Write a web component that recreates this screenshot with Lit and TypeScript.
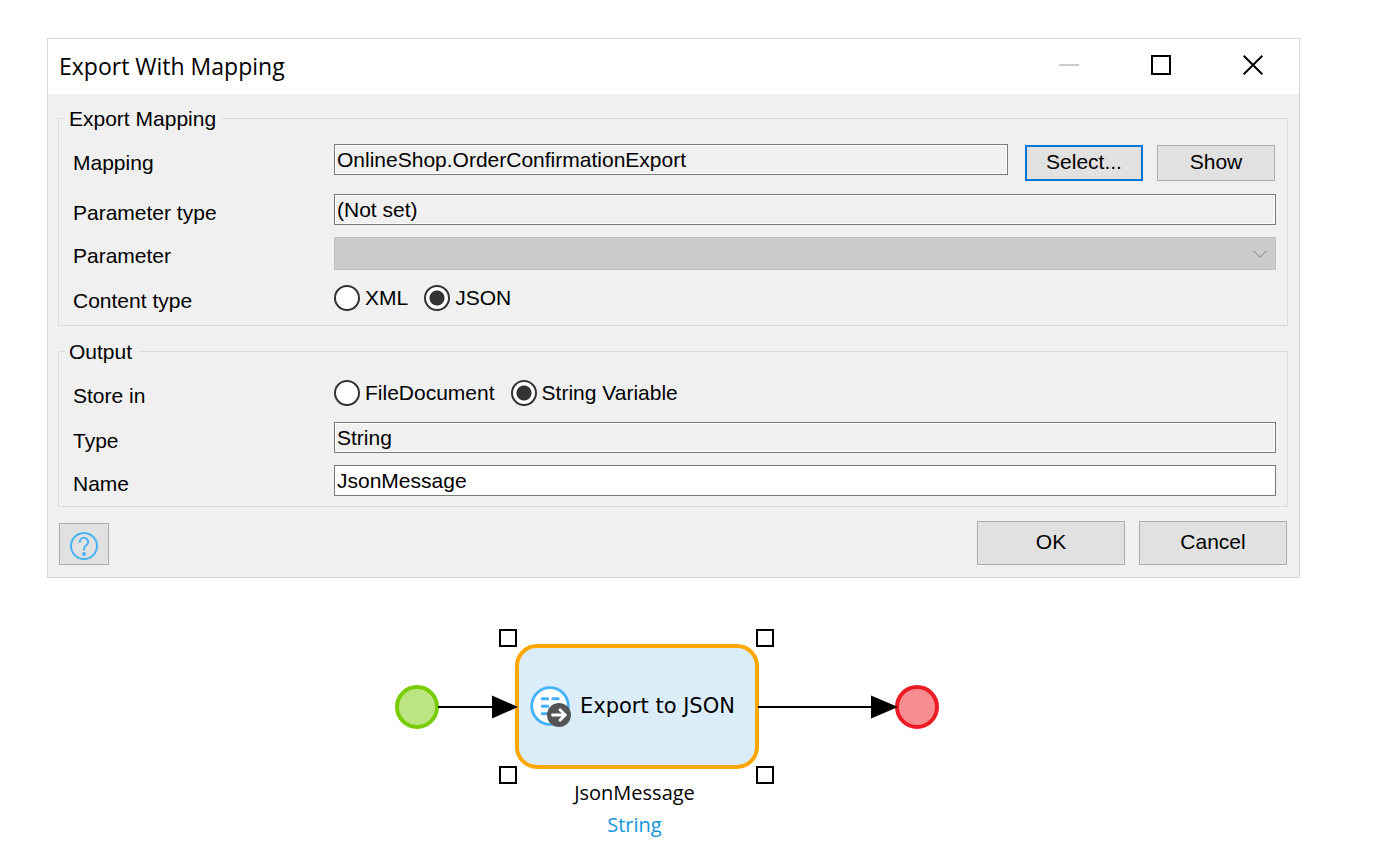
import { LitElement, html, css, svg } from "lit";
import { customElement, property, state } from "lit/decorators.js";

@customElement("mapping-dialog")
class MappingDialog extends LitElement {
  @state() private contentType = "JSON";
  @state() private storeIn = "String Variable";

  static styles = css`
    :host {
      display: block;
      border: 1px solid #d6d6d6;
      background: #f0f0f0;
      color: #000;
      font: 21px/24px "Liberation Sans", Arial, sans-serif;
    }
    * {
      box-sizing: border-box;
    }
    button,
    input,
    select {
      margin: 0;
      border-radius: 0;
      font: inherit;
      color: inherit;
    }
    .titlebar {
      display: flex;
      justify-content: space-between;
      height: 55px;
      padding-left: 11px;
      background: #fff;
    }
    .title {
      margin: 0;
      font: 23px/55px "Open Sans", "Noto Sans", sans-serif;
      white-space: nowrap;
    }
    .window-buttons {
      display: flex;
    }
    .window-button {
      display: grid;
      place-items: center;
      width: 92px;
      height: 52px;
      padding: 0;
      border: 0;
      background: none;
    }
    .body {
      padding: 11px 11px 12px 10px;
    }
    .group {
      min-width: 0;
      margin: 0 0 12px;
      padding: 13px 11px 10px 14px;
      border: 1px solid #dcdcdc;
    }
    .group:last-of-type {
      margin-bottom: 14px;
    }
    .legend {
      margin-left: -8px;
      padding: 2px 6px 0 4px;
    }
    .rows {
      display: grid;
      gap: 12px;
    }
    .row {
      display: grid;
      grid-template-columns: 261px minmax(0, 1fr);
      align-items: start;
      min-height: 31px;
    }
    .label {
      padding-top: 7px;
    }
    .control {
      display: flex;
    }
    .field {
      flex: 1;
      min-width: 0;
      width: 100%;
      height: 31px;
      padding: 0 2px;
      border: 1px solid #7a7a7a;
      outline: none;
      background: #fff;
    }
    .field[readonly] {
      background: #f0f0f0;
      box-shadow: inset 0 0 0 1px #fff;
    }
    .field-buttons {
      display: flex;
      gap: 14px;
      margin-left: 17px;
      padding: 1px 1px 1px 0;
    }
    .button {
      width: 148px;
      height: 44px;
      padding: 0 0 2px;
      border: 1px solid #adadad;
      background: #e1e1e1;
    }
    .button.small {
      width: 118px;
      height: 36px;
    }
    .button.default {
      border: 2px solid #0078d7;
    }
    .select-wrap {
      position: relative;
      flex: 1;
    }
    .select {
      display: block;
      width: 100%;
      height: 33px;
      border: 1px solid #bfbfbf;
      background: #ccc;
      appearance: none;
      opacity: 1;
    }
    .chevron {
      position: absolute;
      right: 9px;
      top: 13px;
    }
    .radios {
      display: flex;
      gap: 16px;
      height: 33px;
      padding-top: 3px;
    }
    .radio-option {
      display: flex;
      gap: 5px;
      height: 26px;
      line-height: 26px;
    }
    .radio {
      width: 26px;
      height: 26px;
      border: 2px solid #333;
      border-radius: 50%;
      background: #fff;
      appearance: none;
    }
    .radio:checked {
      background: radial-gradient(circle, #333 7px, #fff 8px);
    }
    .footer {
      display: flex;
      align-items: flex-end;
      gap: 14px;
      padding: 0 1px;
    }
    .help {
      display: grid;
      place-items: center;
      width: 50px;
      height: 42px;
      margin-right: auto;
      padding: 3px 0 0;
      border: 1px solid #adadad;
      background: #e1e1e1;
    }
  `;

  private radios(name: string, options: string[], current: string, pick: (v: string) => void) {
    return html`<div class="radios" role="radiogroup" aria-labelledby="${name}-label">
      ${options.map(
        (o) => html`<label class="radio-option"
          ><input class="radio" type="radio" name=${name} .value=${o} ?checked=${o === current} @change=${() => pick(o)} />${o}</label
        >`
      )}
    </div>`;
  }

  render() {
    return html`
      <header class="titlebar">
        <h1 class="title">Export With Mapping</h1>
        <div class="window-buttons">
          <button class="window-button" aria-label="Minimize" disabled>
            <svg width="20" height="20"><path d="M0 10H20" stroke="#ccc" stroke-width="2" /></svg>
          </button>
          <button class="window-button" aria-label="Maximize">
            <svg width="20" height="20"><rect x="1" y="1" width="18" height="18" fill="none" stroke="#000" stroke-width="2" /></svg>
          </button>
          <button class="window-button" aria-label="Close">
            <svg width="20" height="20"><path d="M.7.7 19.3 19.3M19.3.7.7 19.3" stroke="#000" stroke-width="2" /></svg>
          </button>
        </div>
      </header>
      <div class="body">
        <fieldset class="group">
          <legend class="legend">Export Mapping</legend>
          <div class="rows">
            <div class="row">
              <label class="label" for="mapping">Mapping</label>
              <div class="control">
                <input class="field" id="mapping" readonly value="OnlineShop.OrderConfirmationExport" />
                <div class="field-buttons">
                  <button class="button small default">Select...</button>
                  <button class="button small">Show</button>
                </div>
              </div>
            </div>
            <div class="row">
              <label class="label" for="ptype">Parameter type</label>
              <input class="field" id="ptype" readonly value="(Not set)" />
            </div>
            <div class="row">
              <label class="label" for="param">Parameter</label>
              <div class="select-wrap">
                <select class="select" id="param" disabled></select>
                <svg class="chevron" width="14" height="9"><path d="M.7 1 7 7.3 13.3 1" fill="none" stroke="#a3a3a3" stroke-width="1.4" /></svg>
              </div>
            </div>
            <div class="row">
              <span class="label" id="content-label">Content type</span>
              ${this.radios("content", ["XML", "JSON"], this.contentType, (v) => (this.contentType = v))}
            </div>
          </div>
        </fieldset>
        <fieldset class="group">
          <legend class="legend">Output</legend>
          <div class="rows">
            <div class="row">
              <span class="label" id="store-label">Store in</span>
              ${this.radios("store", ["FileDocument", "String Variable"], this.storeIn, (v) => (this.storeIn = v))}
            </div>
            <div class="row">
              <label class="label" for="type">Type</label>
              <input class="field" id="type" readonly value="String" />
            </div>
            <div class="row">
              <label class="label" for="name">Name</label>
              <input class="field" id="name" value="JsonMessage" />
            </div>
          </div>
        </fieldset>
        <footer class="footer">
          <button class="help" aria-label="Help">
            <svg width="28" height="28" viewBox="0 0 28 28" fill="none" stroke="#4bb4f7">
              <circle cx="14" cy="14" r="13" stroke-width="2" />
              <path d="M9.8 10.8V10a4.2 4.2 0 0 1 8.4 0c0 1.700-.9 2.500-2.200 3.500-1.300 1-2 1.700-2 3.300v1.700" stroke-width="2" />
              <circle cx="14" cy="22" r="2" fill="#4bb4f7" stroke="none" />
            </svg>
          </button>
          <button class="button">OK</button>
          <button class="button">Cancel</button>
        </footer>
      </div>
    `;
  }
}

@customElement("flow-connector")
class FlowConnector extends LitElement {
  @property({ type: Number }) length = 76;
  @property({ type: Number }) head = 26;

  static styles = css`
    :host {
      display: block;
      z-index: 1;
    }
    .arrow {
      display: block;
      overflow: visible;
    }
  `;

  render() {
    const tip = this.length + 3;
    const base = tip - this.head;
    return html`<svg class="arrow" width=${this.length} height="24" aria-hidden="true">
      ${svg`<path d="M-1 12H${base}" stroke="#000" stroke-width="2"/><path d="M${base} .5V23.5L${tip} 12Z"/>`}
    </svg>`;
  }
}

@customElement("flow-canvas")
class FlowCanvas extends LitElement {
  static styles = css`
    :host {
      display: grid;
      grid-template-columns: 44px 76px 244px 136px 44px;
      align-items: center;
      color: #000;
    }
    .event {
      display: block;
    }
    .activity {
      position: relative;
      box-sizing: border-box;
      display: flex;
      align-items: center;
      gap: 8px;
      height: 125px;
      padding: 0 0 0 11px;
      border: 4px solid #fca704;
      border-radius: 22px;
      background: #daedf9;
      font: 21px/24px "DejaVu Sans", Verdana, sans-serif;
      white-space: nowrap;
    }
    .activity-name {
      padding-bottom: 2px;
    }
    .handle {
      position: absolute;
      box-sizing: border-box;
      width: 18px;
      height: 18px;
      border: 2px solid #000;
      background: #fff;
    }
    .top {
      top: -19px;
    }
    .bottom {
      bottom: -19px;
    }
    .left {
      left: -20px;
    }
    .right {
      right: -19px;
    }
    .caption {
      grid-column: 3;
      padding: 8px 5px 0 0;
      font: 20px/32px "Open Sans", "Noto Sans", sans-serif;
      text-align: center;
    }
    .variable-type {
      color: #1296db;
    }
  `;

  render() {
    return html`
      <svg class="event" width="44" height="44" role="img" aria-label="Start event">
        <circle cx="22" cy="22" r="20" fill="#bbe583" stroke="#78cc04" stroke-width="4" />
      </svg>
      <flow-connector .length=${76} .head=${26}></flow-connector>
      <div class="activity">
        <span class="handle top left"></span>
        <span class="handle top right"></span>
        <span class="handle bottom left"></span>
        <span class="handle bottom right"></span>
        <svg width="42" height="42" viewBox="0 0 42 42" aria-hidden="true">
          <circle cx="20" cy="20" r="18.300" fill="#fff" stroke="#43b1fb" stroke-width="2.800" />
          <path d="M12.300 12.700h5.400M22.800 12.700h5.400M12.300 20.200h5.400M22.800 20.200h5.400M12.300 27.700h5.400" stroke="#43b1fb" stroke-width="3" stroke-linecap="round" />
          <circle cx="29" cy="29" r="12" fill="#555" />
          <path d="M22.500 29H34M30 23.800 35.200 29 30 34.200" fill="none" stroke="#fff" stroke-width="2.800" stroke-linecap="round" />
        </svg>
        <span class="activity-name">Export to JSON</span>
      </div>
      <flow-connector .length=${136} .head=${27}></flow-connector>
      <svg class="event" width="44" height="44" role="img" aria-label="End event">
        <circle cx="22" cy="22" r="20" fill="#f78d91" stroke="#ed1c24" stroke-width="4" />
      </svg>
      <div class="caption">
        <div>JsonMessage</div>
        <div class="variable-type">String</div>
      </div>
    `;
  }
}

@customElement("app-root")
class AppRoot extends LitElement {
  static styles = css`
    :host {
      display: block;
      box-sizing: border-box;
      min-height: 100vh;
      padding: 38px 87px 0 47px;
      background: #fff;
    }
    .canvas {
      margin: 66px 0 0 348px;
    }
  `;

  render() {
    return html`
      <mapping-dialog></mapping-dialog>
      <flow-canvas class="canvas"></flow-canvas>
    `;
  }
}
